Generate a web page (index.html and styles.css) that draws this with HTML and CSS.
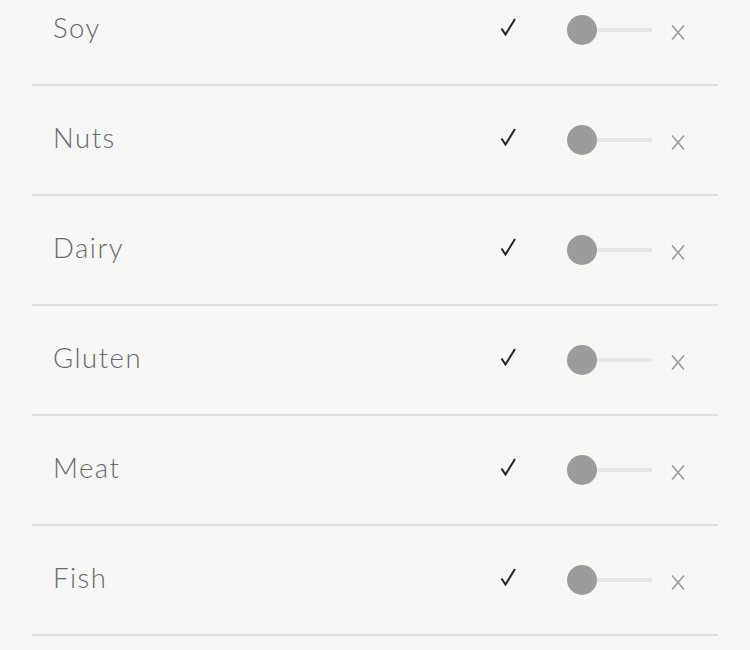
FILE: index.html
```html
<!DOCTYPE html>
<html>
<head>
<meta charset="utf-8">
<link rel="stylesheet" href="styles.css">
</head>
<body>
<ul class="list">
  <li class="row"><span class="label">Soy</span><svg class="check" viewBox="0 0 16 18"><path d="M1.5 10.5 L5.5 16.5 L15 1"/></svg><span class="toggle"><span class="knob"></span></span><svg class="remove" viewBox="0 0 14 15"><path d="M1 0.5 L13 14.5 M13 0.5 L1 14.5"/></svg></li>
  <li class="row"><span class="label">Nuts</span><svg class="check" viewBox="0 0 16 18"><path d="M1.5 10.5 L5.5 16.5 L15 1"/></svg><span class="toggle"><span class="knob"></span></span><svg class="remove" viewBox="0 0 14 15"><path d="M1 0.5 L13 14.5 M13 0.5 L1 14.5"/></svg></li>
  <li class="row"><span class="label">Dairy</span><svg class="check" viewBox="0 0 16 18"><path d="M1.5 10.5 L5.5 16.5 L15 1"/></svg><span class="toggle"><span class="knob"></span></span><svg class="remove" viewBox="0 0 14 15"><path d="M1 0.5 L13 14.5 M13 0.5 L1 14.5"/></svg></li>
  <li class="row"><span class="label">Gluten</span><svg class="check" viewBox="0 0 16 18"><path d="M1.5 10.5 L5.5 16.5 L15 1"/></svg><span class="toggle"><span class="knob"></span></span><svg class="remove" viewBox="0 0 14 15"><path d="M1 0.5 L13 14.5 M13 0.5 L1 14.5"/></svg></li>
  <li class="row"><span class="label">Meat</span><svg class="check" viewBox="0 0 16 18"><path d="M1.5 10.5 L5.5 16.5 L15 1"/></svg><span class="toggle"><span class="knob"></span></span><svg class="remove" viewBox="0 0 14 15"><path d="M1 0.5 L13 14.5 M13 0.5 L1 14.5"/></svg></li>
  <li class="row"><span class="label">Fish</span><svg class="check" viewBox="0 0 16 18"><path d="M1.5 10.5 L5.5 16.5 L15 1"/></svg><span class="toggle"><span class="knob"></span></span><svg class="remove" viewBox="0 0 14 15"><path d="M1 0.5 L13 14.5 M13 0.5 L1 14.5"/></svg></li>
</ul>
</body>
</html>
```
FILE: styles.css
```css
html, body {
  margin: 0;
  padding: 0;
  background: #f7f7f5;
  height: 100%;
  overflow: hidden;
}
.list {
  list-style: none;
  margin: -24px 32px 0 32px;
  padding: 0;
}
.row {
  display: flex;
  align-items: center;
  height: 108px;
  border-bottom: 2px solid #dededc;
  padding: 0 33px 0 21px;
}
.label {
  flex: 1;
  font-family: Lato, "Liberation Sans", sans-serif;
  font-weight: 300;
  font-size: 27.5px;
  letter-spacing: 1.5px;
  color: #6a6a6a;
  line-height: 1;
  margin-top: -5px;
}
.check {
  width: 16px;
  height: 18px;
  margin-top: -7px;
  fill: none;
  stroke: #222;
  stroke-width: 2;
  stroke-linejoin: miter;
}
.toggle {
  display: flex;
  align-items: center;
  width: 85px;
  height: 30px;
  margin-left: 51px;
  background: linear-gradient(#e6e6e4, #e6e6e4) no-repeat 15px center / 70px 4px;
}
.knob {
  width: 30px;
  height: 30px;
  border-radius: 50%;
  background: #9c9c9c;
}
.remove {
  width: 14px;
  height: 15px;
  margin-left: 19px;
  margin-top: 4px;
  fill: none;
  stroke: #9c9c9c;
  stroke-width: 1.6;
}
```
